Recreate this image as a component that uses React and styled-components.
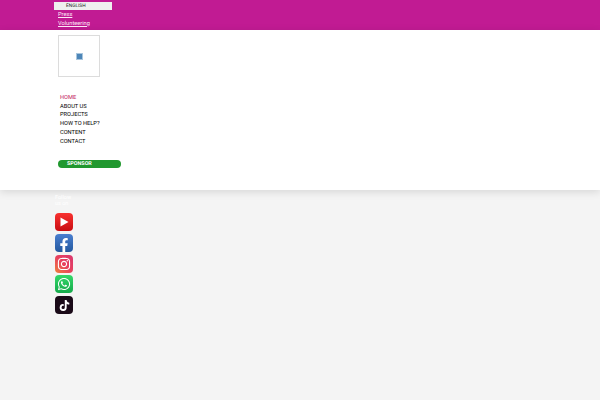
import React from "react";
import styled, { createGlobalStyle } from "styled-components";
import { FaFacebookF, FaInstagram, FaWhatsapp, FaTiktok } from "react-icons/fa";

const GlobalStyle = createGlobalStyle`
  html, body {
    margin: 0;
    padding: 0;
    height: 100%;
    background: #f4f4f4;
    font-family: Roboto, "Liberation Sans", sans-serif;
    text-rendering: geometricPrecision;
  }
`;

const TopBar = styled.header`
  height: 30px;
  background: #c11b93;
  padding: 2px 0 0 54px;
  box-sizing: border-box;
`;

const Language = styled.div`
  width: 58px;
  height: 8px;
  background: #efefef;
  color: #222;
  font-size: 4.8px;
  line-height: 9px;
  padding-left: 12px;
  box-sizing: border-box;
`;

const TopLink = styled.a`
  display: block;
  margin-left: 4px;
  color: #fde6f6;
  font-size: 5.7px;
  line-height: 8.5px;
  text-decoration: underline;
`;

const Links = styled.div`
  padding-top: 1px;
`;

const Panel = styled.section`
  height: 160px;
  background: #fff;
  padding: 5px 0 0 58px;
  box-sizing: border-box;
  box-shadow: 0 2px 8px rgba(0, 0, 0, 0.12);
`;

const LogoBox = styled.div`
  width: 42px;
  height: 42px;
  box-sizing: border-box;
  border: 1px solid #dcdcdc;
  display: flex;
  align-items: center;
  justify-content: center;
`;

const BrokenImage = styled.div`
  width: 7px;
  height: 7px;
  background: #4d86b8;
  border: 1px solid #a9c6de;
  box-sizing: border-box;
`;

const Nav = styled.nav`
  margin: 17px 0 0 2px;
  display: flex;
  flex-direction: column;
`;

const NavItem = styled.a`
  color: ${(p) => (p.$active ? "#c2185b" : "#000")};
  font-size: 5.7px;
  line-height: 8.7px;
  font-weight: 400;
`;

const Sponsor = styled.a`
  display: block;
  margin-top: 14px;
  width: 63px;
  height: 8px;
  border-radius: 4px;
  background: #21982f;
  color: #fff;
  font-size: 5.4px;
  font-weight: 700;
  line-height: 9px;
  padding-left: 9px;
  box-sizing: border-box;
`;

const Social = styled.aside`
  padding: 5px 0 0 55px;
  display: flex;
  flex-direction: column;
  align-items: flex-start;
`;

const FollowText = styled.div`
  width: 22px;
  color: #fff;
  font-size: 5.5px;
  line-height: 6px;
  height: 18px;
`;

const IconList = styled.div`
  display: flex;
  flex-direction: column;
  gap: 2.8px;
`;

const IconTile = styled.a`
  width: 18px;
  height: 18px;
  border-radius: 4px;
  background: ${(p) => p.$bg};
  color: #fff;
  display: flex;
  align-items: center;
  justify-content: center;
  overflow: hidden;
`;

const Play = () => (
  <svg width="10" height="10" viewBox="0 0 10 10">
    <path d="M1.5 0.5 L9.5 5 L1.5 9.5 Z" fill="#fff" />
  </svg>
);

const social = [
  { name: "youtube", bg: "linear-gradient(180deg,#f8312f,#c90d12)", icon: <Play /> },
  { name: "facebook", bg: "linear-gradient(180deg,#4a7fd0,#23589f)", icon: <FaFacebookF size={14} style={{ marginTop: 4 }} /> },
  { name: "instagram", bg: "linear-gradient(45deg,#f0803c,#e8405f 50%,#d8386f)", icon: <FaInstagram size={14} /> },
  { name: "whatsapp", bg: "linear-gradient(180deg,#34d86a,#14a94a)", icon: <FaWhatsapp size={14} /> },
  { name: "tiktok", bg: "#1a0a18", icon: <FaTiktok size={11} /> },
];

const navItems = ["HOME", "ABOUT US", "PROJECTS", "HOW TO HELP?", "CONTENT", "CONTACT"];

export default function App() {
  return (
    <>
      <GlobalStyle />
      <TopBar>
        <Language>ENGLISH</Language>
        <Links>
          <TopLink>Press</TopLink>
          <TopLink>Volunteering</TopLink>
        </Links>
      </TopBar>
      <Panel>
        <LogoBox>
          <BrokenImage />
        </LogoBox>
        <Nav>
          {navItems.map((item, i) => (
            <NavItem key={item} $active={i === 0}>
              {item}
            </NavItem>
          ))}
        </Nav>
        <Sponsor>SPONSOR</Sponsor>
      </Panel>
      <Social>
        <FollowText>Follow us on</FollowText>
        <IconList>
          {social.map((s) => (
            <IconTile key={s.name} $bg={s.bg}>
              {s.icon}
            </IconTile>
          ))}
        </IconList>
      </Social>
    </>
  );
}
